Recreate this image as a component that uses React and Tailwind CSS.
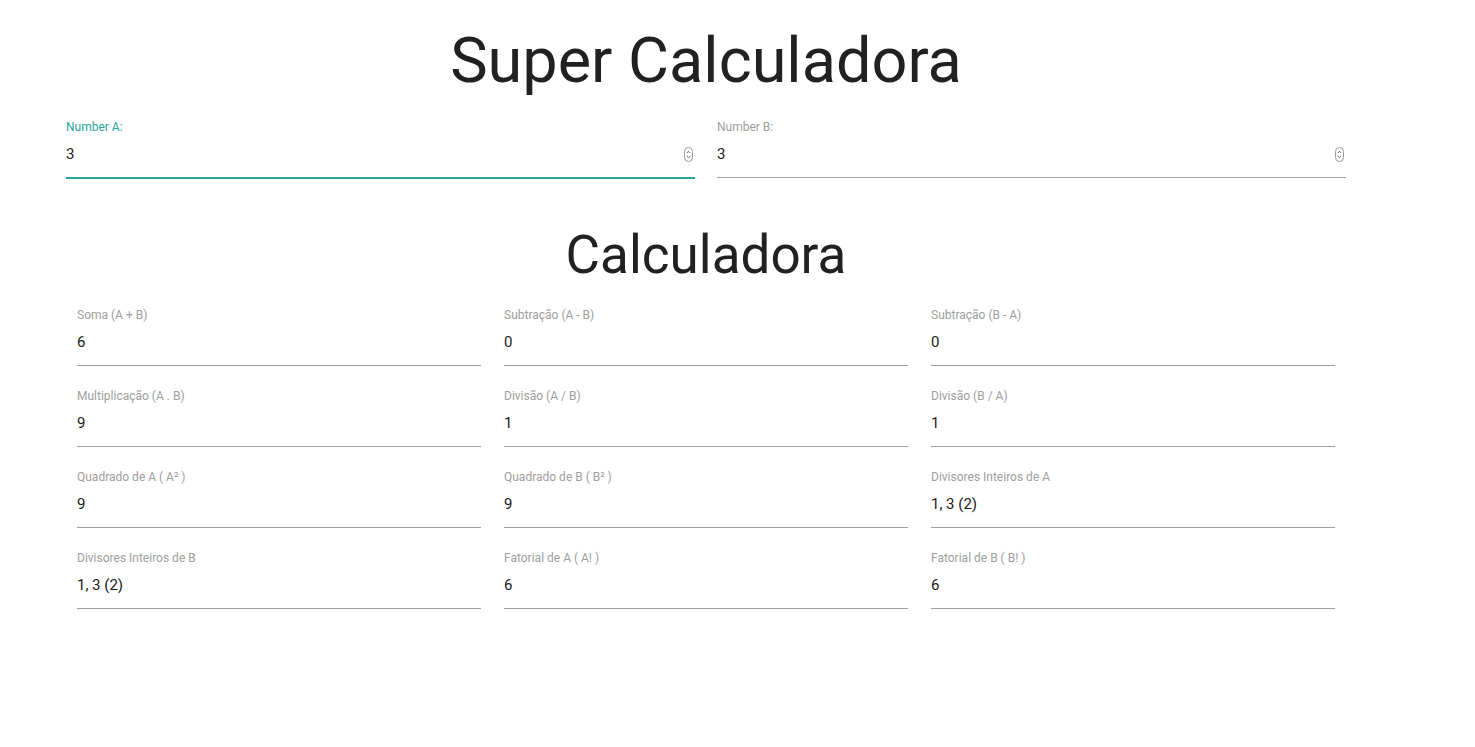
import { useState } from 'react';

const fatorial = (n) => (n <= 1 ? 1 : n * fatorial(n - 1));
const divisores = (n) => {
  const list = [];
  for (let i = 1; i <= n; i++) if (n % i === 0) list.push(i);
  return `${list.join(', ')} (${list.length})`;
};

function Spinner() {
  return (
    <svg width="9" height="15" viewBox="0 0 9 15" className="mr-[2px] shrink-0">
      <rect x="0.5" y="0.5" width="8" height="14" rx="4" fill="white" stroke="#9a9a9a" />
      <path d="M2.8 6 L4.5 4.3 L6.2 6" fill="none" stroke="#555" strokeWidth="0.9" />
      <path d="M2.8 9 L4.5 10.7 L6.2 9" fill="none" stroke="#555" strokeWidth="0.9" />
    </svg>
  );
}

function NumberField({ label, value, focused }) {
  return (
    <div>
      <div className={`pt-[1px] text-[12px] leading-[16px] ${focused ? 'text-[#26a69a]' : 'text-[#9e9e9e]'}`}>{label}</div>
      <div
        className={`mt-[7px] flex items-center justify-between pb-[11px] border-b ${
          focused ? 'border-[#26a69a] shadow-[0_1px_0_0_#26a69a]' : 'border-[#9e9e9e]'
        }`}
      >
        <span className="text-[15px] leading-[24px] text-[#1a1a1a]">{value}</span>
        <Spinner />
      </div>
    </div>
  );
}

function ResultField({ label, value }) {
  return (
    <div>
      <div className="pt-[1px] text-[12px] leading-[16px] text-[#9e9e9e]">{label}</div>
      <div className="mt-[7px] pb-[11px] border-b border-[#9e9e9e] text-[15px] leading-[24px] text-[#1a1a1a]">{value}</div>
    </div>
  );
}

export default function App() {
  const [a] = useState(3);
  const [b] = useState(3);

  const results = [
    ['Soma (A + B)', a + b],
    ['Subtração (A - B)', a - b],
    ['Subtração (B - A)', b - a],
    ['Multiplicação (A . B)', a * b],
    ['Divisão (A / B)', a / b],
    ['Divisão (B / A)', b / a],
    ['Quadrado de A ( A² )', a * a],
    ['Quadrado de B ( B² )', b * b],
    ['Divisores Inteiros de A', divisores(a)],
    ['Divisores Inteiros de B', divisores(b)],
    ['Fatorial de A ( A! )', fatorial(a)],
    ['Fatorial de B ( B! )', fatorial(b)],
  ];

  return (
    <div className="min-h-[747px] bg-white font-['Roboto',sans-serif]">
      <div className="ml-[55px] w-[1302px]">
        <h1 className="h-[118px] pt-[4px] text-center text-[63px] leading-[114px] text-[#212121]">Super Calculadora</h1>

        <div className="grid grid-cols-2 gap-x-[22px] px-[11px]">
          <NumberField label="Number A:" value={a} focused />
          <NumberField label="Number B:" value={b} />
        </div>

        <h2 className="h-[128px] pt-[47px] text-center text-[53px] leading-[60px] text-[#212121]">Calculadora</h2>

        <div className="grid grid-cols-3 gap-x-[23px] gap-y-[21px] px-[22px]">
          {results.map(([label, value]) => (
            <ResultField key={label} label={label} value={value} />
          ))}
        </div>
      </div>
    </div>
  );
}
